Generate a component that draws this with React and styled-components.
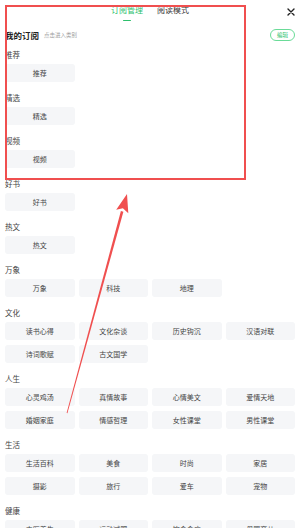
import React from "react";
import styled, { createGlobalStyle } from "styled-components";

const GlobalStyle = createGlobalStyle`
  html, body {
    margin: 0;
    padding: 0;
    background: #ffffff;
  }
  body {
    font-family: "Noto Sans CJK SC", "Noto Sans", sans-serif;
    overflow: hidden;
  }
`;

const GREEN = "#2dbf6c";
const RED = "#f04f4f";

const Page = styled.div`
  position: relative;
  width: 300px;
  height: 528px;
  overflow: hidden;
  padding: 0 5px;
  box-sizing: border-box;
`;

const TopBar = styled.div`
  display: grid;
  grid-template-columns: 1fr auto 1fr;
  align-items: center;
  height: 22px;
`;

const Tabs = styled.div`
  grid-column: 2;
  display: flex;
  gap: 14px;
`;

const Tab = styled.div`
  position: relative;
  font-size: 8px;
  line-height: 10px;
  color: ${(p) => (p.$active ? GREEN : "#333")};
  padding-bottom: 2px;

  &::after {
    content: "";
    display: ${(p) => (p.$active ? "block" : "none")};
    position: absolute;
    left: 50%;
    bottom: -4px;
    width: 8px;
    height: 1.5px;
    margin-left: -4px;
    border-radius: 1px;
    background: ${GREEN};
  }
`;

const Close = styled.div`
  grid-column: 3;
  justify-self: end;
  display: flex;
  align-items: center;
  padding-top: 1px;
`;

const MyHeader = styled.div`
  display: flex;
  align-items: center;
  height: 14px;
  margin-top: 6px;
`;

const MyTitle = styled.div`
  font-size: 8.5px;
  font-weight: 700;
  color: #222;
`;

const MyHint = styled.div`
  font-size: 5.5px;
  color: #a0a0a0;
  margin-left: 5px;
`;

const EditButton = styled.div`
  margin-left: auto;
  width: 25px;
  height: 12px;
  box-sizing: border-box;
  border: 1px solid #6adb98;
  border-radius: 6px;
  background: #fff;
  color: ${GREEN};
  font-size: 5.5px;
  display: flex;
  align-items: center;
  justify-content: center;
`;

const Sections = styled.div`
  margin-top: 8px;
`;

const Section = styled.div`
  margin-bottom: 11px;
`;

const Label = styled.div`
  font-size: 7.5px;
  line-height: 10px;
  height: 10px;
  color: #444;
  margin-bottom: 4px;
`;

const Grid = styled.div`
  display: grid;
  grid-template-columns: repeat(4, 1fr);
  gap: 5px 4px;
`;

const Chip = styled.div`
  height: 18px;
  border-radius: 3px;
  background: #f5f6f8;
  color: #444;
  font-size: 7px;
  display: flex;
  align-items: center;
  justify-content: center;
`;

const Highlight = styled.div`
  position: absolute;
  left: 5px;
  top: 5px;
  width: 241px;
  height: 175px;
  box-sizing: border-box;
  border: 2px solid ${RED};
  pointer-events: none;
`;

const ArrowLayer = styled.svg`
  position: absolute;
  left: 0;
  top: 0;
  pointer-events: none;
`;

const sections = [
  { name: "推荐", items: ["推荐"] },
  { name: "精选", items: ["精选"] },
  { name: "视频", items: ["视频"] },
  { name: "好书", items: ["好书"] },
  { name: "热文", items: ["热文"] },
  { name: "万象", items: ["万象", "科技", "地理"] },
  { name: "文化", items: ["读书心得", "文化杂谈", "历史钩沉", "汉语对联", "诗词歌赋", "古文国学"] },
  { name: "人生", items: ["心灵鸡汤", "真情故事", "心情美文", "爱情天地", "婚姻家庭", "情感哲理", "女性课堂", "男性课堂"] },
  { name: "生活", items: ["生活百科", "美食", "时尚", "家居", "摄影", "旅行", "爱车", "宠物"] },
  { name: "健康", items: ["中医养生", "运动减肥", "饮食食疗", "母婴育儿"] },
];

export default function App() {
  return (
    <>
      <GlobalStyle />
      <Page>
        <TopBar>
          <Tabs>
            <Tab $active>订阅管理</Tab>
            <Tab>阅读模式</Tab>
          </Tabs>
          <Close>
            <svg width="8" height="8" viewBox="0 0 8 8">
              <path d="M1 1 L7 7 M7 1 L1 7" stroke="#222" strokeWidth="1.4" strokeLinecap="round" />
            </svg>
          </Close>
        </TopBar>
        <MyHeader>
          <MyTitle>我的订阅</MyTitle>
          <MyHint>点击进入类别</MyHint>
          <EditButton>编辑</EditButton>
        </MyHeader>
        <Sections>
          {sections.map((s) => (
            <Section key={s.name}>
              <Label>{s.name}</Label>
              <Grid>
                {s.items.map((it) => (
                  <Chip key={it}>{it}</Chip>
                ))}
              </Grid>
            </Section>
          ))}
        </Sections>
        <Highlight />
        <ArrowLayer width="300" height="528" viewBox="0 0 300 528">
          <path
            d="M66.6 413 L67.4 413.2 L123.4 211.8 L120.9 211.1 Z"
            fill={RED}
          />
          <path
            d="M127 194 L128.3 213.2 L122.9 208.2 L116.2 209.8 Z"
            fill={RED}
          />
        </ArrowLayer>
      </Page>
    </>
  );
}
